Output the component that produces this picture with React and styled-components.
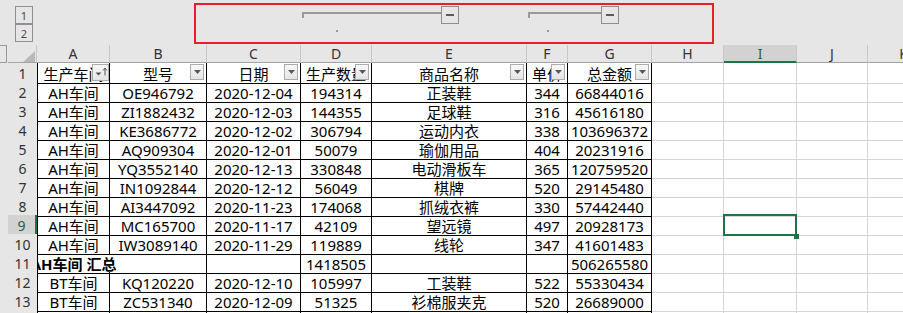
import React from 'react'
import styled, { createGlobalStyle } from 'styled-components'

// gutter, row header, A..K
const COLS = '8px 29px 73px 97px 94px 71px 155px 41px 84px 72px 73px 71px 72px'
const LETTERS = ['A', 'B', 'C', 'D', 'E', 'F', 'G', 'H', 'I', 'J', 'K']
const GREEN = '#217346'

const HEADERS = ['生产车间', '型号', '日期', '生产数量', '商品名称', '单价', '总金额']

const ROWS = [
  ['AH车间', 'OE946792', '2020-12-04', '194314', '正装鞋', '344', '66844016'],
  ['AH车间', 'ZI1882432', '2020-12-03', '144355', '足球鞋', '316', '45616180'],
  ['AH车间', 'KE3686772', '2020-12-02', '306794', '运动内衣', '338', '103696372'],
  ['AH车间', 'AQ909304', '2020-12-01', '50079', '瑜伽用品', '404', '20231916'],
  ['AH车间', 'YQ3552140', '2020-12-13', '330848', '电动滑板车', '365', '120759520'],
  ['AH车间', 'IN1092844', '2020-12-12', '56049', '棋牌', '520', '29145480'],
  ['AH车间', 'AI3447092', '2020-11-23', '174068', '抓绒衣裤', '330', '57442440'],
  ['AH车间', 'MC165700', '2020-11-17', '42109', '望远镜', '497', '20928173'],
  ['AH车间', 'IW3089140', '2020-11-29', '119889', '线轮', '347', '41601483'],
  ['AH车间 汇总', '', '', '1418505', '', '', '506265580', 'total'],
  ['BT车间', 'KQ120220', '2020-12-10', '105997', '工装鞋', '522', '55330434'],
  ['BT车间', 'ZC531340', '2020-12-09', '51325', '衫棉服夹克', '520', '26689000'],
]

const GlobalStyle = createGlobalStyle`
  html, body {
    margin: 0;
    padding: 0;
    overflow: hidden;
    background: #e6e6e6;
  }
  * {
    box-sizing: border-box;
  }
`

const Sheet = styled.div`
  position: relative;
  width: 903px;
  height: 313px;
  overflow: hidden;
  background: #e6e6e6;
  font-family: 'Noto Sans', 'Noto Sans CJK SC', sans-serif;
  color: #000;
`

const Line = styled.div`
  display: grid;
  grid-template-columns: ${COLS};
  width: 940px;
`

/* ---------- outline strip ---------- */

const OutlineStrip = styled(Line)`
  height: 45px;
`

const Levels = styled.div`
  grid-column: 1 / span 2;
  display: flex;
  flex-direction: column;
  padding: 6px 0 0 15px;
`

const LevelButton = styled.div`
  width: 18px;
  height: 18px;
  border: 1px solid #8f8f8f;
  display: flex;
  align-items: center;
  justify-content: center;
  font-size: 11px;
  color: #4a4a4a;
`

const GroupSpan = styled.div`
  grid-column: ${p => p.$col};
  display: flex;
  flex-direction: column;
  padding: 12px 0 0 ${p => p.$inset}px;
`

const GroupBar = styled.div`
  height: 6px;
  border-top: 2px solid #9a9a9a;
  border-left: 2px solid #9a9a9a;
`

const GroupDot = styled.div`
  width: 2px;
  height: 2px;
  margin: 12px auto 0;
  background: #9a9a9a;
`

const GroupEnd = styled.div`
  grid-column: ${p => p.$col};
  display: flex;
  align-items: flex-start;
  padding-top: 6px;
`

const GroupTail = styled.div`
  flex: 1;
  height: 2px;
  margin-top: 6px;
  background: #9a9a9a;
`

const Spacer = styled.div`
  flex: 1;
`

const MinusButton = styled.div`
  width: 18px;
  height: 18px;
  border: 1px solid #8f8f8f;
  display: flex;
  align-items: center;
  justify-content: center;
  &::before {
    content: '';
    width: 8px;
    height: 2px;
    background: #5c5c5c;
  }
`

const Highlight = styled.div`
  position: absolute;
  left: 194px;
  top: 3px;
  width: 520px;
  height: 41px;
  border: 2px solid #e5202a;
`

/* ---------- column header ---------- */

const HeadRow = styled(Line)`
  height: 18px;
`

const GutterHead = styled.div`
  background: #e6e6e6;
`

const LevelStub = styled.div`
  width: 7px;
  height: 18px;
  border: 1px solid #9a9a9a;
  border-left: none;
`

const Corner = styled.div`
  display: flex;
  align-items: flex-end;
  justify-content: flex-end;
  padding-right: 1px;
  border-bottom: 1px solid #a3a3a3;
  border-right: 1px solid #c8c8c8;
  &::after {
    content: '';
    width: 0;
    height: 0;
    border-left: 12px solid transparent;
    border-bottom: 11px solid #b9b9b9;
  }
`

const ColHead = styled.div`
  display: flex;
  align-items: center;
  justify-content: center;
  font-size: 14px;
  color: ${p => (p.$active ? '#2d5e3e' : '#333')};
  background: ${p => (p.$active ? '#d2d2d2' : '#e6e6e6')};
  border-right: 1px solid #c8c8c8;
  border-bottom: ${p => (p.$active ? `2px solid ${GREEN}` : '1px solid #a3a3a3')};
  white-space: nowrap;
  overflow: hidden;
`

/* ---------- data rows ---------- */

const Row = styled(Line)`
  height: 19px;
  background: #fff;
`

const Gutter = styled.div`
  background: #e6e6e6;
  position: relative;
  z-index: 1;
`

const RowHead = styled.div`
  position: relative;
  z-index: 1;
  display: flex;
  align-items: center;
  justify-content: center;
  padding-top: 1px;
  font-size: 14px;
  color: ${p => (p.$active ? '#2d5e3e' : '#333')};
  background: ${p => (p.$active ? '#d2d2d2' : '#e6e6e6')};
  border-bottom: 1px solid #cdcdcd;
  border-right: ${p => (p.$active ? `2px solid ${GREEN}` : 'none')};
`

const Cell = styled.div`
  position: ${p => (p.$anchor ? 'relative' : 'static')};
  display: flex;
  align-items: center;
  justify-content: center;
  padding-top: 2px;
  font-size: 15px;
  line-height: 17px;
  font-weight: ${p => (p.$bold ? 700 : 400)};
  white-space: nowrap;
  overflow: ${p => (p.$spill ? 'visible' : 'hidden')};
  border-left: ${p => (p.$first ? '1px solid #000' : 'none')};
  border-bottom: 1px solid ${p => (p.$boxed ? '#000' : '#d4d4d4')};
  border-right: 1px solid
    ${p => (p.$spill ? 'transparent' : p.$boxed ? '#000' : '#d4d4d4')};
`

const Selection = styled.div`
  position: absolute;
  inset: -1px;
  border: 2px solid ${GREEN};
  pointer-events: none;
`

const FillHandle = styled.div`
  position: absolute;
  right: -3px;
  bottom: -4px;
  width: 5px;
  height: 5px;
  background: ${GREEN};
`

const FilterButton = styled.div`
  position: absolute;
  top: 1px;
  right: ${p => (p.$sorted ? 0 : 2)}px;
  width: ${p => (p.$sorted ? 17 : 14)}px;
  height: ${p => (p.$sorted ? 17 : 16)}px;
  border: 1px solid #acacac;
  background: linear-gradient(#f8f8f8, #e4e4e4);
  display: flex;
  align-items: center;
  justify-content: center;
`

const FilterIcon = ({ sorted }) =>
  sorted ? (
    <svg width="15" height="15" viewBox="0 0 15 15">
      <path d="M2.5 7.5h6l-3 3z" fill="#555" />
      <path d="M12 3.5v7" stroke="#555" strokeWidth="1" />
      <path d="M10 5.5l2-2.5 2 2.5" stroke="#555" strokeWidth="1" fill="none" />
    </svg>
  ) : (
    <svg width="9" height="6" viewBox="0 0 9 6">
      <path d="M1 1h7l-3.5 4z" fill="#5a5a5a" />
    </svg>
  )

const SELECTED_ROW = 9
const SELECTED_COL = 8 // I

const App = () => (
  <>
    <GlobalStyle />
    <Sheet>
      <OutlineStrip>
        <Levels>
          <LevelButton>1</LevelButton>
          <LevelButton>2</LevelButton>
        </Levels>
        <GroupSpan $col={6} $inset={1}>
          <GroupBar />
          <GroupDot />
        </GroupSpan>
        <GroupEnd $col={7}>
          <GroupTail />
          <MinusButton />
          <Spacer />
        </GroupEnd>
        <GroupSpan $col={8} $inset={1}>
          <GroupBar />
          <GroupDot />
        </GroupSpan>
        <GroupEnd $col={9}>
          <GroupTail />
          <MinusButton />
          <Spacer />
        </GroupEnd>
      </OutlineStrip>

      <HeadRow>
        <GutterHead>
          <LevelStub />
        </GutterHead>
        <Corner />
        {LETTERS.map((l, i) => (
          <ColHead key={l} $active={i === SELECTED_COL}>
            {l}
          </ColHead>
        ))}
      </HeadRow>

      <Row>
        <Gutter />
        <RowHead>1</RowHead>
        {HEADERS.map((h, i) => (
          <Cell key={h} $boxed $first={i === 0} $anchor>
            {h}
            <FilterButton $sorted={i === 0}>
              <FilterIcon sorted={i === 0} />
            </FilterButton>
          </Cell>
        ))}
        {LETTERS.slice(7).map(l => (
          <Cell key={l} />
        ))}
      </Row>

      {ROWS.map((r, ri) => {
        const n = ri + 2
        const total = r[7] === 'total'
        return (
          <Row key={n}>
            <Gutter />
            <RowHead $active={n === SELECTED_ROW}>{n}</RowHead>
            {r.slice(0, 7).map((v, ci) => (
              <Cell
                key={ci}
                $boxed
                $first={ci === 0}
                $spill={total && ci === 0}
                $bold={total && ci === 0}
              >
                {v}
              </Cell>
            ))}
            {LETTERS.slice(7).map((l, ci) => {
              const sel = n === SELECTED_ROW && ci + 7 === SELECTED_COL
              return (
                <Cell key={l} $anchor={sel} $spill={sel}>
                  {sel && (
                    <>
                      <Selection />
                      <FillHandle />
                    </>
                  )}
                </Cell>
              )
            })}
          </Row>
        )
      })}

      {/* row 14, only its top edge shows */}
      <Row>
        <Gutter />
        <RowHead />
        {HEADERS.map((h, i) => (
          <Cell key={h} $boxed $first={i === 0} />
        ))}
        {LETTERS.slice(7).map(l => (
          <Cell key={l} />
        ))}
      </Row>

      <Highlight />
    </Sheet>
  </>
)

export default App
